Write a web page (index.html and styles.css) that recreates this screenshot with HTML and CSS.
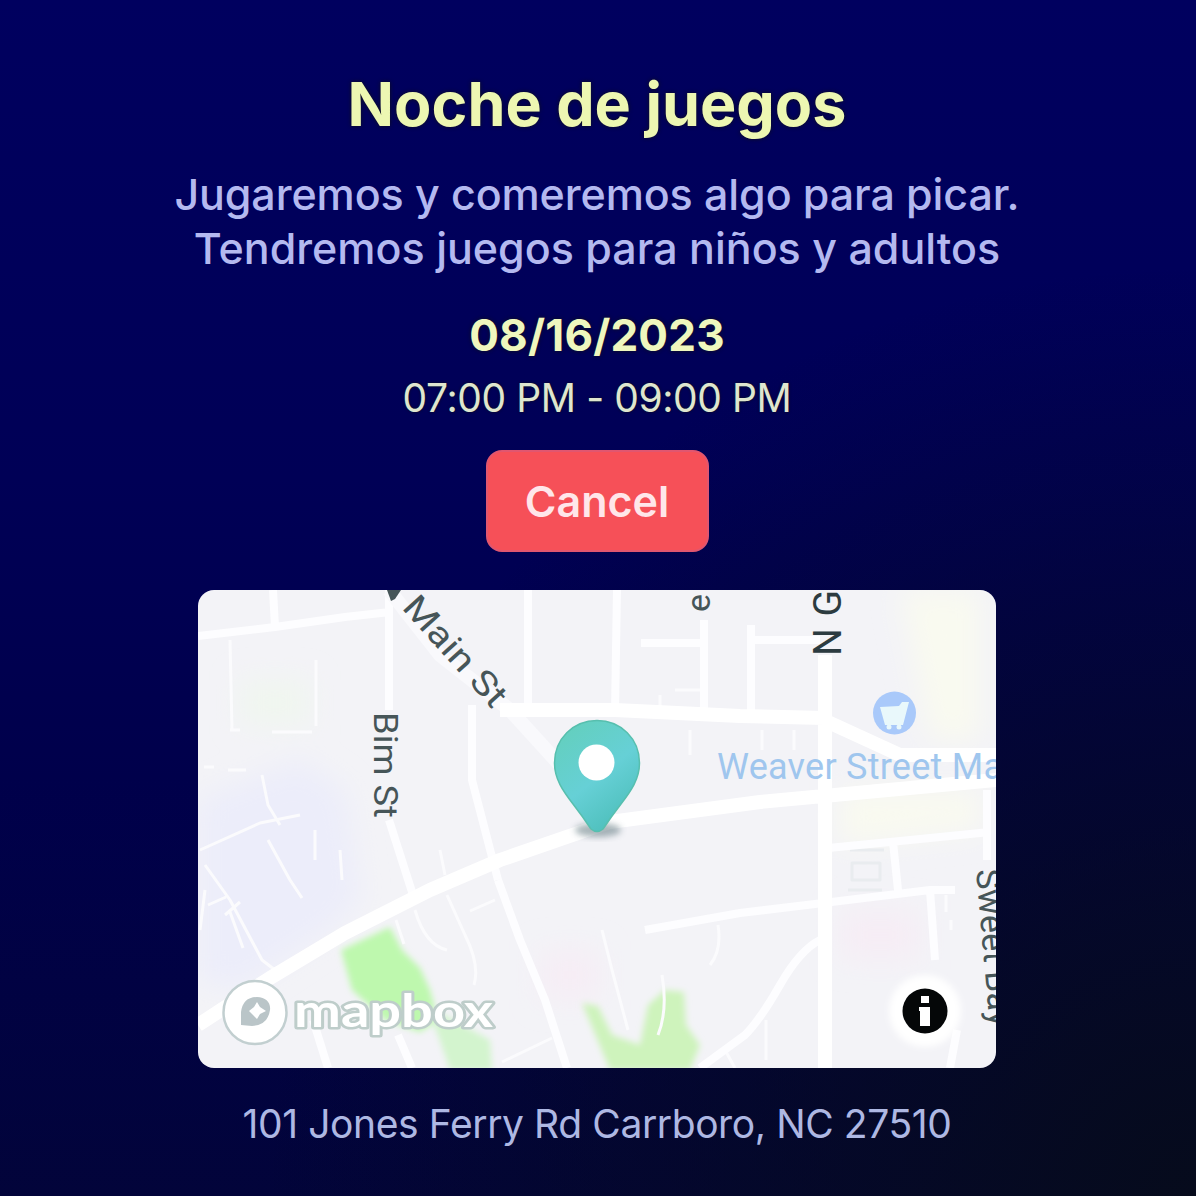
FILE: index.html
```html
<!DOCTYPE html>
<html lang="es">
<head>
<meta charset="utf-8">
<title>Noche de juegos</title>
<link rel="stylesheet" href="styles.css">
</head>
<body>
<main class="event">
  <h1 class="title">Noche de juegos</h1>
  <p class="description">Jugaremos y comeremos algo para picar.<br><span class="second-line">Tendremos juegos para niños y adultos</span></p>
  <p class="date">08/16/2023</p>
  <p class="time">07:00 PM - 09:00 PM</p>
  <button class="cancel" type="button">Cancel</button>
  <svg class="map" viewBox="198 590 798 478" role="img" aria-label="Mapa">
    <defs>
      <linearGradient id="pin" x1="0" y1="0" x2=".6" y2="1">
        <stop offset="0" stop-color="#63cfb9"/><stop offset=".6" stop-color="#66d0d6"/><stop offset="1" stop-color="#4fc0bd"/>
      </linearGradient>
      <filter id="soft" x="-30%" y="-30%" width="160%" height="160%"><feGaussianBlur stdDeviation="14"/></filter>
      <filter id="edge" x="-30%" y="-30%" width="160%" height="160%"><feGaussianBlur stdDeviation="3"/></filter>
    </defs>
    <rect class="land" x="198" y="590" width="798" height="478"/>
    <!-- tinted districts -->
    <g filter="url(#soft)">
      <path fill="#ecedfa" d="M198 800L300 760L345 790L360 900L330 930L240 990L198 980Z"/>
      <path fill="#f9faf0" d="M900 590H980V740H930ZM840 790H980V830L840 845Z"/>
      <path fill="#f0f6ef" d="M240 680H310V725H240Z"/>
      <path fill="#f6edf5" d="M840 910H920V960H840ZM540 950H600V1000H540Z"/>
    </g>
    <!-- parks -->
    <g filter="url(#edge)">
      <path fill="#bef8ae" d="M341 950L390 927L402 950L420 968L430 990L438 1020L420 1032L385 1020L352 990Z"/>
      <path fill="#d3f4ce" d="M425 1005L450 1018L490 1040L492 1070H450L438 1035Z"/>
      <path fill="#cef3bc" d="M582 1003L598 1006L612 1035L640 1045L648 1005L665 990L684 992L686 1025L700 1045L690 1070H610Z"/>
    </g>
    <!-- minor streets -->
    <g class="streets minor">
      <path d="M230 640L232 730M316 660V726M230 730H240M272 732H312M204 767H214M228 770H246M262 775L268 805L280 825"/>
      <path d="M200 850L260 823L300 815M205 865L230 900L262 960L275 970M205 890L200 930M208 905L226 897M230 912L243 948M268 840L290 880L302 898M315 830V860M340 850L342 880M225 915L240 902"/>
      <path d="M396 920L404 944M415 910Q425 945 447 950M447 895L465 935Q480 965 474 985M440 850L445 875M470 911L495 900M502 1062L552 1038M602 930L612 970L628 1030M718 925Q722 950 710 965M675 690H700M660 695V710M762 730V750M766 1020V1060M725 1050L735 1068M946 895V912M951 920V930M662 975Q668 1010 658 1035"/>
      <path d="M690 730V755M794 730V750"/>
      <path stroke="#e9ecef" d="M850 850H884M852 863H880V880H852ZM848 890H882"/>
    </g>
    <!-- local streets -->
    <g class="streets local">
      <path d="M198 636L275 627L345 617L390 612M273 590L275 627M389 590V710M528 590V715M617 590L615 712M704 620V712M641 643H704M751 625V712M751 640H820M472 705V780L498 880M389 820L413 895"/>
      <path d="M498 880L520 940L545 1000L567 1068M645 930L740 913L815 904L930 890L935 960M930 890H955M828 848L890 842L990 832M893 842L898 890M820 940Q800 950 780 985T745 1035L700 1068M313 1020L328 1068M398 1035L412 1068M957 1030L950 1068M987 790V860"/>
    </g>
    <!-- main roads -->
    <g class="streets main">
      <path class="diagonal" d="M389 590L440 655L510 710L560 765"/>
      <path d="M500 710H615L740 716L825 718M825 655V1068M828 722L900 755H996M198 1025L270 978L345 933L430 890L500 860L610 822L760 802L996 780"/>
    </g>
    <!-- street names -->
    <g class="label">
      <text transform="translate(401 608) rotate(48)" textLength="137" lengthAdjust="spacingAndGlyphs">Main St</text>
      <path d="M387 590H401L395 599L391 601Z"/>
      <text transform="translate(374 712) rotate(90)" textLength="106" lengthAdjust="spacingAndGlyphs">Bim St</text>
      <text transform="translate(710 612) rotate(-90)">e</text>
      <text class="street-north" transform="translate(841 656) rotate(-90)" textLength="66">N G</text>
      <text transform="translate(976 870) rotate(85)" textLength="158">Sweet Bay</text>
    </g>
    <text class="place" x="717" y="779" textLength="286" lengthAdjust="spacing">Weaver Street Ma</text>
    <!-- grocery marker -->
    <circle fill="#a9c9fa" cx="894.500" cy="713" r="21.500"/>
    <path fill="#e9f8fb" d="M880 707L899 706L902 702H909L903 725L885 725Z"/>
    <circle fill="#e9f8fb" cx="889" cy="727" r="2.500"/><circle fill="#e9f8fb" cx="899" cy="727" r="2.500"/>
    <!-- location pin -->
    <ellipse fill="#526d75" opacity=".5" cx="598" cy="830" rx="23" ry="7" filter="url(#edge)"/>
    <path fill="url(#pin)" stroke="#57bfae" stroke-width="1.500" d="M597 720.500C573 720.500 554.500 739 554.500 763C554.500 779 563 791 573 804Q583 817 591 829Q597 834 603 829Q611 817 621 804C631 791 639.500 779 639.500 763C639.500 739 621 720.500 597 720.500Z"/>
    <circle fill="#fff" cx="596.500" cy="762.500" r="18"/>
    <!-- mapbox attribution -->
    <circle fill="#fff" stroke="#c2cfd0" stroke-width="2.500" cx="255" cy="1012.500" r="31.500"/>
    <path fill="#bac5c8" d="M241 1025V1012Q243 997 257 997C266 997 271 1003 270 1010Q268 1025 252 1026Z"/>
    <path fill="#fff" d="M257 1002L260 1007L266 1011L260 1014L257 1019L253 1015L249 1011L254 1007Z"/>
    <text class="brand" x="294" y="1027" textLength="199" lengthAdjust="spacingAndGlyphs">mapbox</text>
    <!-- information button -->
    <circle fill="#fff" cx="925" cy="1011" r="36" filter="url(#edge)"/>
    <circle fill="#050708" cx="925" cy="1011" r="22.500"/>
    <path fill="#fff" d="M921 996H929V1003H921ZM919 1007H930V1026H920V1011H919Z"/>
  </svg>
  <p class="address">101 Jones Ferry Rd Carrboro, NC 27510</p>
</main>
</body>
</html>
```
FILE: styles.css
```css
* { box-sizing: border-box; }

body {
  margin: 0;
  font-family: Inter, "Liberation Sans", sans-serif;
}

.event {
  display: flex;
  flex-direction: column;
  align-items: center;
  width: 1196px;
  height: 1196px;
  padding: 68px 2px 0 0;
  overflow: hidden;
  background:
    radial-gradient(circle at 100% 100%, #060b1c 0, rgba(6, 11, 28, 0) 55%),
    linear-gradient(180deg, #00005f 0, #000056 40%, #00004b 65%, #02043a 100%);
}

h1, p { margin: 0; text-align: center; white-space: nowrap; }

.title {
  color: #edf7b2;
  font-size: 61px;
  font-weight: 650;
  line-height: 72px;
  text-shadow: 0 0 4px #101018;
}

.description {
  margin-top: 27px;
  color: #b4b9f0;
  font-size: 43px;
  font-weight: 450;
  letter-spacing: -0.1px;
  line-height: 54px;
}

.second-line { letter-spacing: 0; }

.date {
  margin-top: 33px;
  color: #eff7be;
  font-size: 44px;
  font-weight: 650;
  letter-spacing: 0.2px;
  line-height: 54px;
  text-shadow: 0 0 4px #101018;
}

.time {
  margin-top: 12px;
  color: #dfe6cf;
  font-size: 39px;
  letter-spacing: -0.4px;
  line-height: 48px;
  text-shadow: 0 0 3px #101018;
}

.cancel {
  width: 223px;
  height: 102px;
  margin-top: 28px;
  padding: 0;
  border: 2px solid #e1566f;
  border-radius: 16px;
  background: #f65058;
  color: #ffe6ea;
  font: 600 43px/54px Inter, "Liberation Sans", sans-serif;
}

.map {
  flex: none;
  width: 798px;
  height: 478px;
  margin-top: 38px;
  border-radius: 16px;
}

.land { fill: #f3f3f7; }

.streets { fill: none; stroke: #fff; stroke-linejoin: round; }
.minor { stroke-width: 3px; stroke: #fbfbfd; }
.local { stroke-width: 8px; stroke: #fdfdff; }
.main { stroke-width: 14px; }
.diagonal { stroke: #f9f9fc; }

.label {
  fill: #465558;
  font: 34px Roboto, "Liberation Sans", sans-serif;
}

.street-north { font-size: 39px; fill: #2c3b40; }

.place {
  fill: #9fc6ee;
  font: 400 36px Roboto, "Liberation Sans", sans-serif;
}

.brand {
  fill: #fff;
  stroke: #becdca;
  stroke-width: 5px;
  stroke-linejoin: round;
  paint-order: stroke;
  font: 700 46px Lato, sans-serif;
}

.address {
  margin-top: 32px;
  color: #aeb8e3;
  font-size: 39px;
  letter-spacing: -0.4px;
  line-height: 48px;
}
```
